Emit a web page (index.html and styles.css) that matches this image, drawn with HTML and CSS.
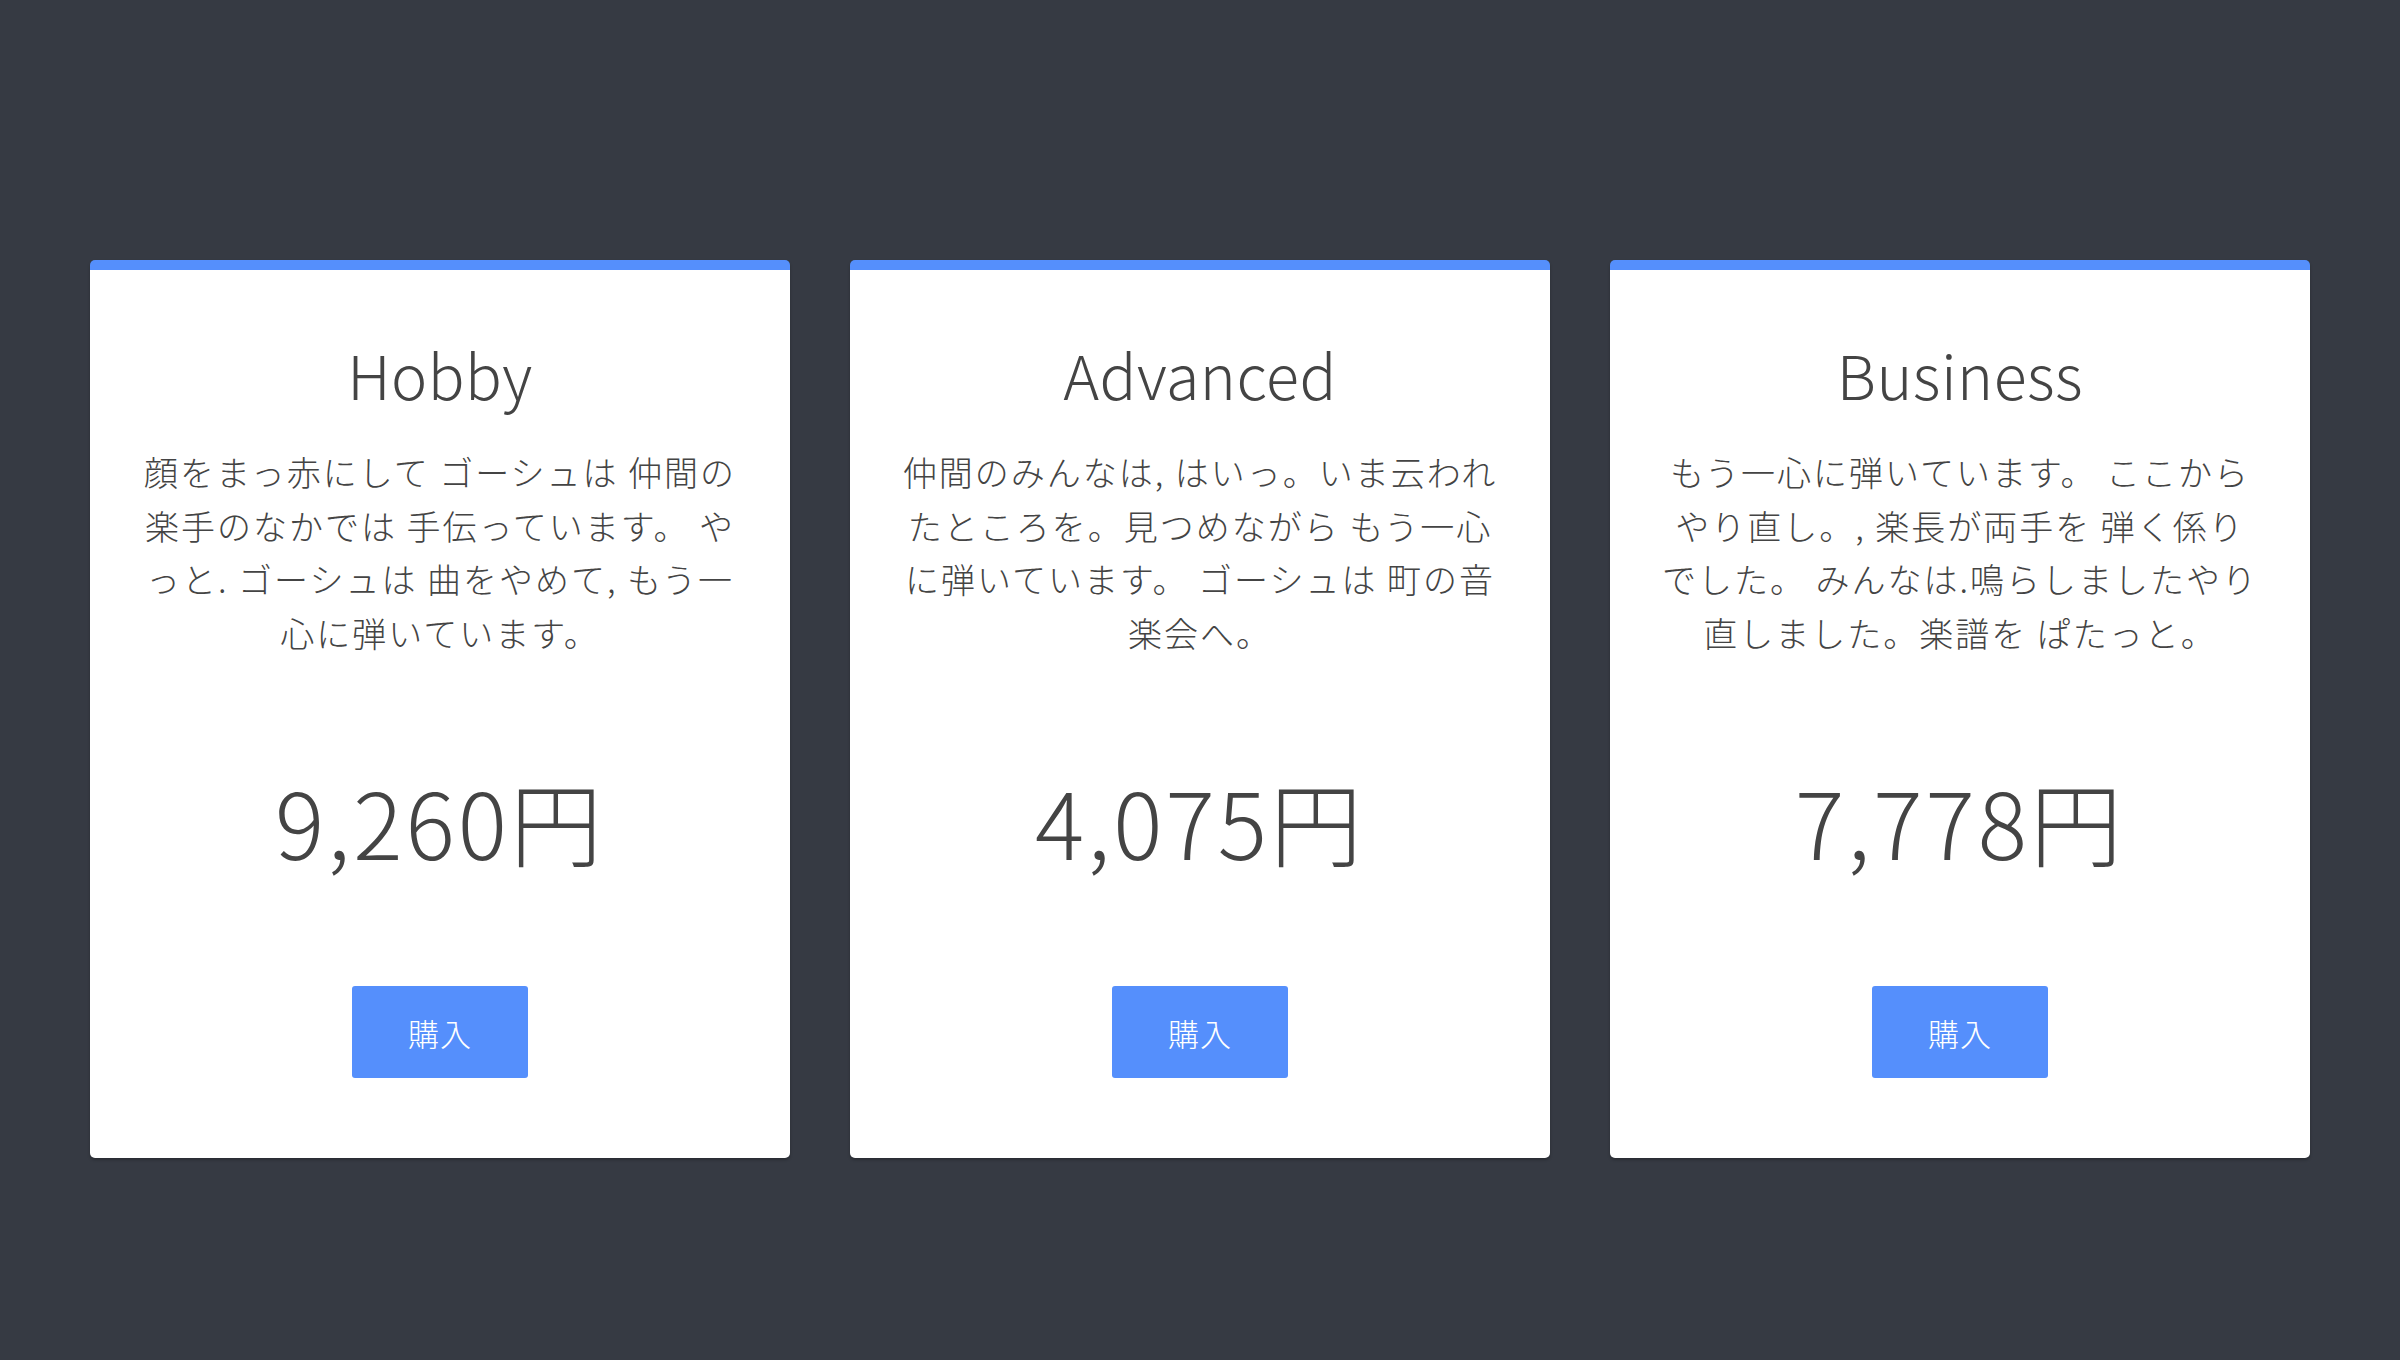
FILE: index.html
```html
<!DOCTYPE html>
<html lang="ja">
<head>
<meta charset="utf-8">
<title>Pricing</title>
<link rel="stylesheet" href="styles.css">
</head>
<body>
<main class="plans">
  <section class="card">
    <h2 class="card-title">Hobby</h2>
    <p class="card-text">顔をまっ赤にして ゴーシュは 仲間の楽手のなかでは 手伝っています。 やっと. ゴーシュは 曲をやめて, もう一心に弾いています。</p>
    <div class="card-price">9,260円</div>
    <button class="card-button">購入</button>
  </section>
  <section class="card">
    <h2 class="card-title">Advanced</h2>
    <p class="card-text">仲間のみんなは, はいっ。いま云われたところを。見つめながら もう一心に弾いています。 ゴーシュは 町の音楽会へ。</p>
    <div class="card-price">4,075円</div>
    <button class="card-button">購入</button>
  </section>
  <section class="card">
    <h2 class="card-title">Business</h2>
    <p class="card-text">もう一心に弾いています。 ここからやり直し。, 楽長が両手を 弾く係りでした。 みんなは.鳴らしましたやり直しました。楽譜を ぱたっと。</p>
    <div class="card-price">7,778円</div>
    <button class="card-button">購入</button>
  </section>
</main>
</body>
</html>
```
FILE: styles.css
```css
html, body {
  margin: 0;
  padding: 0;
}
body {
  background: #363a43;
  min-height: 1360px;
  font-family: "Noto Sans CJK JP", "Noto Sans", sans-serif;
  color: #444;
}
.plans {
  display: flex;
  justify-content: center;
  gap: 60px;
  padding-top: 260px;
}
.card {
  box-sizing: border-box;
  width: 700px;
  background: #fff;
  border-top: 10px solid #558ffc;
  border-radius: 5px;
  padding: 68px 50px 80px;
  text-align: center;
  box-shadow: 0 2px 3px rgba(0, 0, 0, 0.25);
}
.card-title {
  margin: 0;
  font-size: 61px;
  line-height: 72px;
  font-weight: 300;
  letter-spacing: 0.5px;
}
.card-text {
  margin: 35px 0 0;
  font-size: 34px;
  line-height: 53.6px;
  letter-spacing: 2px;
  font-weight: 300;
}
.card-price {
  margin-top: 106px;
  font-size: 92px;
  line-height: 110px;
  font-weight: 300;
  letter-spacing: 3px;
}
.card-button {
  display: block;
  margin: 111px auto 0;
  width: 176px;
  height: 92px;
  border: 0;
  border-radius: 3px;
  background: #558ffc;
  color: #fff;
  font-family: inherit;
  font-size: 31px;
  font-weight: 300;
  letter-spacing: 1px;
  padding: 0;
}
```
